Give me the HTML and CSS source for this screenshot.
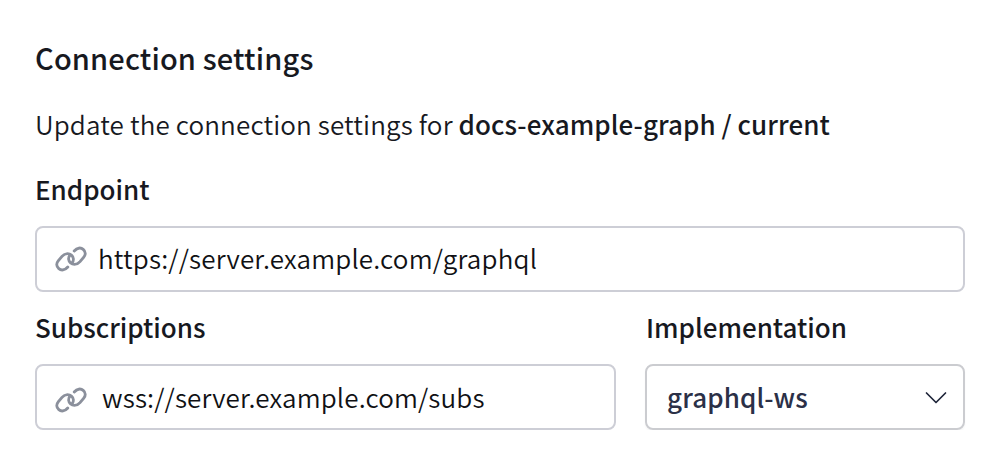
FILE: index.html
```html
<!DOCTYPE html>
<html lang="en">
<head>
<meta charset="utf-8">
<title>Connection settings</title>
<link rel="stylesheet" href="styles.css">
</head>
<body>
<main class="settings">
  <h1 class="title">Connection settings</h1>
  <p class="intro">Update the connection settings for <strong class="graph-name">docs-example-graph / current</strong></p>
  <div class="field">
    <div class="label endpoint-label">Endpoint</div>
    <div class="control">
      <svg class="link-icon" viewBox="0 0 32 26"><path d="M12.8 21 C9.8 24.4 6.2 24.7 3.8 22.6 C1.2 20.4 1.2 17.2 3.4 14.6 L7 10.4 C9.6 7.5 13.6 6.8 16.4 9.2 C18.8 11.2 19 14.4 17 17"/><path transform="rotate(180 16 13)" d="M12.8 21 C9.8 24.4 6.2 24.7 3.8 22.6 C1.2 20.4 1.2 17.2 3.4 14.6 L7 10.4 C9.6 7.5 13.6 6.8 16.4 9.2 C18.8 11.2 19 14.4 17 17"/></svg>
      <span class="value url">https://server.example.com/graphql</span>
    </div>
  </div>
  <div class="row">
    <div class="field">
      <div class="label subs-label">Subscriptions</div>
      <div class="control">
        <svg class="link-icon subs-icon" viewBox="0 0 32 26"><path d="M12.8 21 C9.8 24.4 6.2 24.7 3.8 22.6 C1.2 20.4 1.2 17.2 3.4 14.6 L7 10.4 C9.6 7.5 13.6 6.8 16.4 9.2 C18.8 11.2 19 14.4 17 17"/><path transform="rotate(180 16 13)" d="M12.8 21 C9.8 24.4 6.2 24.7 3.8 22.6 C1.2 20.4 1.2 17.2 3.4 14.6 L7 10.4 C9.6 7.5 13.6 6.8 16.4 9.2 C18.8 11.2 19 14.4 17 17"/></svg>
        <span class="value subs">wss://server.example.com/subs</span>
      </div>
    </div>
    <div class="field">
      <div class="label impl-label">Implementation</div>
      <div class="control select">
        <span class="selected">graphql-ws</span>
        <svg class="chevron" viewBox="0 0 22 14"><path d="M1.5 2 L11 11.5 L20.5 2"/></svg>
      </div>
    </div>
  </div>
</main>
</body>
</html>
```
FILE: styles.css
```css
* { box-sizing: border-box; }
body {
  margin: 0;
  background: #fff;
  color: #17191f;
  font-family: "Noto Sans CJK SC", "Noto Sans", sans-serif;
  font-size: 26px;
}
.settings { padding: 37px 35px 0; }
.title { margin: 0; font-size: 29px; line-height: 40px; font-weight: 500; letter-spacing: 0.15px; }
.intro { margin: 27px 0 0; line-height: 40px; font-weight: 350; letter-spacing: 0.13px; }
.graph-name { font-weight: 500; letter-spacing: 0.06px; }
.field { display: flex; flex-direction: column; }
.intro + .field { margin-top: 25px; }
.label { font-weight: 500; line-height: 40px; }
.impl-label { padding-left: 1px; }
.control {
  display: flex;
  align-items: center;
  height: 66px;
  margin-top: 17px;
  padding: 0 19px 2px 18px;
  border: 2px solid #cdced6;
  border-radius: 8px;
}
.value { white-space: nowrap; color: #101114; font-weight: 350; letter-spacing: 0.17px; }
.url { padding-bottom: 2px; }
.subs { letter-spacing: 0.14px; }
.link-icon { width: 32px; height: 26px; margin: 2px 11px 0 0; fill: none; stroke: #8b909c; stroke-width: 2.9; stroke-linecap: round; }
.subs-icon { margin: 8px 15px 0 0; }
.row { display: grid; grid-template-columns: 581px 320px; gap: 29px; margin-top: 15px; }
.row .field { min-width: 0; }
.select { justify-content: space-between; padding: 0 16px 2px 20px; border-color: #cbccd0; box-shadow: 0 2px 2px rgba(20, 24, 36, 0.04); }
.selected { color: #2b3047; font-weight: 500; letter-spacing: 0.1px; }
.chevron { width: 22px; height: 14px; margin-top: 4px; fill: none; stroke: #20263a; stroke-width: 1.7; stroke-linecap: round; stroke-linejoin: round; }
```
